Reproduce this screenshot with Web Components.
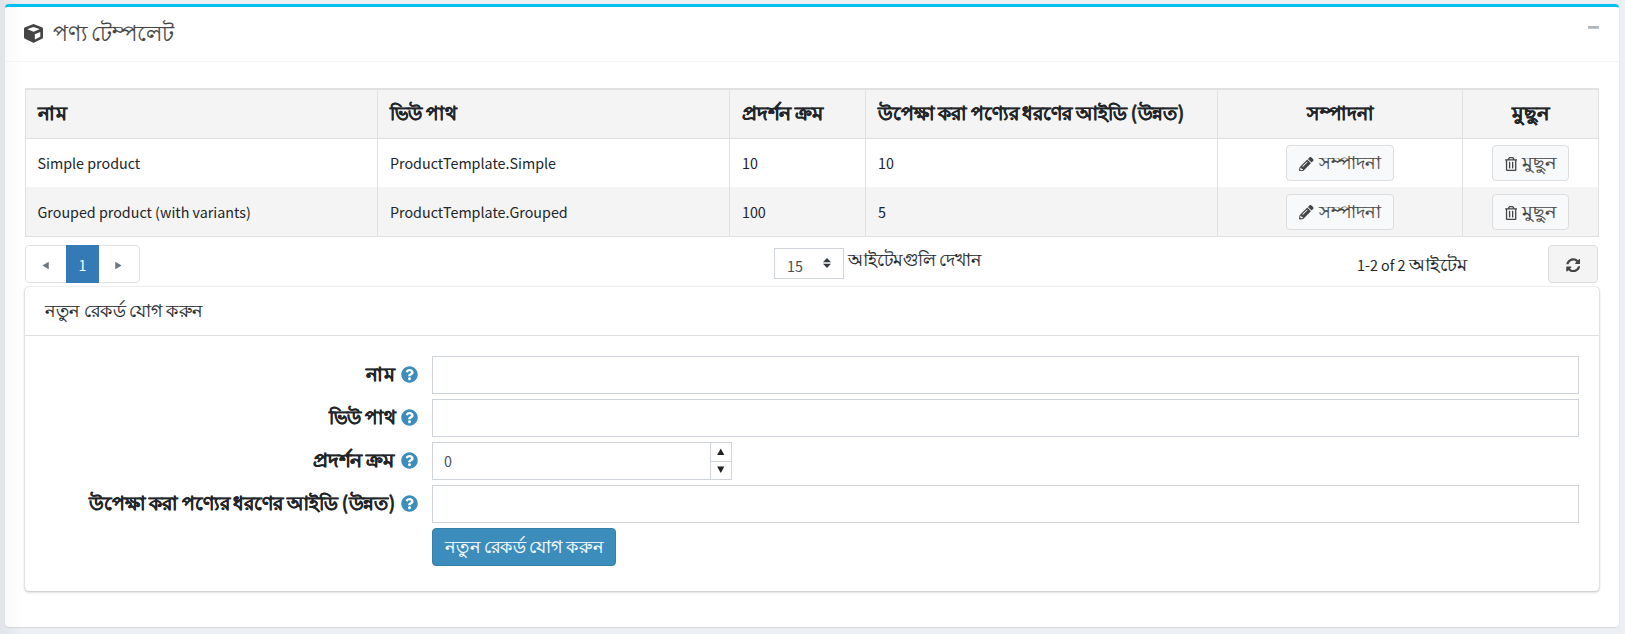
<!DOCTYPE html>
<html lang="bn"><head><meta charset="utf-8"><title>পণ্য টেম্পলেট</title>
<style>
html,body{margin:0;height:100%}
body{background:linear-gradient(90deg,#e1e5ea 0,#ecf0f5 22px);font:14.3px/24px "Source Sans Pro","Noto Sans CJK SC","Noto Sans",sans-serif;color:#212529;height:634px;overflow:hidden;box-sizing:border-box;padding:4px 6px 0 5px}
</style></head><body>
<admin-box>
  <fa-icon slot="title" name="cube" size="19"></fa-icon><bn-text slot="title" w="121" size="22" dy="-1.5">পণ্য টেম্পলেট</bn-text>
  <data-grid></data-grid>
  <grid-pager></grid-pager>
  <record-card heading="নতুন রেকর্ড যোগ করুন">
    <form-row label="নাম" w="29"><text-box></text-box></form-row>
    <form-row label="ভিউ পাথ" w="66.5"><text-box></text-box></form-row>
    <form-row label="প্রদর্শন ক্রম" w="82"><number-box value="0"></number-box></form-row>
    <form-row label="উপেক্ষা করা পণ্যের ধরণের আইডি (উন্নত)" w="306"><text-box></text-box></form-row>
    <form-row><action-button kind="primary"><bn-text w="159" dy="-2.5">নতুন রেকর্ড যোগ করুন</bn-text></action-button></form-row>
  </record-card>
</admin-box>
<script>
const ICONS={
cube:[512,"M239.1 6.3l-208 78c-18.7 7-31.1 25-31.1 45v225.1c0 18.2 10.3 34.8 26.5 42.9l208 104c13.5 6.8 29.4 6.8 42.9 0l208-104c16.3-8.1 26.5-24.8 26.5-42.9V129.3c0-20-12.4-37.9-31.1-44.9l-208-78C262 2.2 250 2.2 239.1 6.3zM256 78l160 60v3l-160 66-160-66v-3l160-60zm36 340V278l148-60v123l-148 77z"],
pencil:[512,"M497.9 142.1l-46.1 46.1c-4.7 4.7-12.3 4.7-17 0l-111-111c-4.7-4.7-4.7-12.3 0-17l46.1-46.1c18.7-18.7 49.1-18.7 67.9 0l60.1 60.1c18.8 18.7 18.8 49.1 0 67.9zM284.2 99.8L21.6 362.4.4 483.9c-2.9 16.4 11.4 30.6 27.8 27.8l121.5-21.3 262.6-262.6c4.7-4.7 4.7-12.3 0-17l-111-111c-4.8-4.7-12.4-4.7-17.1 0zM124.1 339.9c-5.5-5.5-5.5-14.3 0-19.8l154-154c5.5-5.5 14.3-5.5 19.8 0s5.5 14.3 0 19.8l-154 154c-5.5 5.5-14.3 5.5-19.8 0zM88 424h48v36.3l-64.5 11.3-31.1-31.1L51.7 376H88v48z"],
trash:[448,"M268 416h24a12 12 0 0 0 12-12V188a12 12 0 0 0-12-12h-24a12 12 0 0 0-12 12v216a12 12 0 0 0 12 12zM432 80h-82.41l-34-56.7A48 48 0 0 0 274.41 0H173.59a48 48 0 0 0-41.16 23.3L98.41 80H16A16 16 0 0 0 0 96v16a16 16 0 0 0 16 16h16v336a48 48 0 0 0 48 48h288a48 48 0 0 0 48-48V128h16a16 16 0 0 0 16-16V96a16 16 0 0 0-16-16zM171.84 50.91A6 6 0 0 1 177 48h94a6 6 0 0 1 5.15 2.91L293.61 80H154.39zM368 464H80V128h288zm-212-48h24a12 12 0 0 0 12-12V188a12 12 0 0 0-12-12h-24a12 12 0 0 0-12 12v216a12 12 0 0 0 12 12z"],
sync:[512,"M370.72 133.28C339.458 104.008 298.888 87.962 255.848 88c-77.458.068-144.328 53.178-162.791 126.85-1.344 5.363-6.122 9.15-11.651 9.15H24.103c-7.498 0-13.194-6.807-11.807-14.176C33.933 94.924 134.813 8 256 8c66.448 0 126.791 26.136 171.315 68.685L463.03 40.97C478.149 25.851 504 36.559 504 57.941V192c0 13.255-10.745 24-24 24H345.941c-21.382 0-32.09-25.851-16.971-40.971l41.75-41.749zM32 296h134.059c21.382 0 32.09 25.851 16.971 40.971l-41.75 41.75c31.262 29.273 71.835 45.319 114.876 45.28 77.418-.07 144.315-53.144 162.787-126.849 1.344-5.363 6.122-9.15 11.651-9.15h57.304c7.498 0 13.194 6.807 11.807 14.176C478.067 417.076 377.187 504 256 504c-66.448 0-126.791-26.136-171.315-68.685L48.97 471.03C33.851 486.149 8 475.441 8 454.059V320c0-13.255 10.745-24 24-24z"],
question:[512,"M504 256c0 136.997-111.043 248-248 248S8 392.997 8 256C8 119.083 119.043 8 256 8s248 111.083 248 248zM262.655 90c-54.497 0-89.255 22.957-116.549 63.758-3.536 5.286-2.353 12.415 2.715 16.258l34.699 26.31c5.205 3.947 12.621 3.008 16.665-2.122 17.864-22.658 30.113-35.797 57.303-35.797 20.429 0 45.698 13.148 45.698 32.958 0 14.976-12.363 22.667-32.534 33.976C247.128 238.528 216 254.941 216 296v4c0 6.627 5.373 12 12 12h56c6.627 0 12-5.373 12-12v-1.333c0-28.462 83.186-29.647 83.186-106.667 0-58.002-60.165-102-116.531-102zM256 338c-25.365 0-46 20.635-46 46 0 25.364 20.635 46 46 46s46-20.636 46-46c0-25.364-20.635-46-46-46z"],
minus:[448,"M436 200H12Q0 200 0 212V308Q0 320 12 320H436Q448 320 448 308V212Q448 200 436 200z"],
left:[512,"M440 40V472L80 256z"],right:[512,"M72 40V472L432 256z"],
up:[512,"M10 480H502L256 30z"],down:[512,"M10 32H502L256 482z"],
sort:[512,"M50 216H462L256 0zM50 296H462L256 512z"]};
const make=(tag,css,html)=>customElements.define(tag,class extends HTMLElement{
  connectedCallback(){if(this.shadowRoot)return;
    this.attachShadow({mode:"open"}).innerHTML=`<style>*{box-sizing:border-box}:host{box-sizing:border-box}${css}</style>`+(typeof html==="function"?html(this):html)}});

make("fa-icon",":host{display:inline-flex;flex:none}svg{display:block;fill:currentColor}",e=>{
  const [w,d]=ICONS[e.getAttribute("name")],s=+e.getAttribute("size");
  return `<svg width="${s*w/512}" height="${s}" viewBox="0 0 ${w} 512"><path d="${d}"/></svg>`});

make("action-button",`:host{display:inline-flex;align-items:center;justify-content:center;height:38px;padding:0 12px;border:1px solid #ddd;border-radius:4px;background:#f8f9fa;color:#444;gap:5px;white-space:nowrap}
::slotted(fa-icon){margin-top:2px}
:host([kind=primary]){background:#3c8dbc;border-color:#367fa9;color:#fff;width:184px}
:host([kind=edit]){width:108px;height:36px}:host([kind=delete]){width:77px;height:36px}
:host([kind=refresh]){width:50px;background:#f4f4f4;padding:0}`,"<slot></slot>");

make("admin-box",`:host{display:flex;flex-direction:column;height:623px;border-top:3px solid #00c0ef;border-radius:4px;background:linear-gradient(90deg,#fafafb 0,#fff 20px);box-shadow:0 1px 1px rgba(0,0,0,.1),0 0 1px rgba(0,0,0,.15)}
header{display:flex;height:55px;border-bottom:1px solid #f4f4f4;padding:0 20px 0 19px;color:#444;line-height:50px}
.t{display:flex;gap:10px;flex:1;align-items:flex-start}.t ::slotted(fa-icon){margin-top:17px}
.m{color:#adb5bd;margin-top:14px}main{display:flex;flex-direction:column;padding:26px 20px 0}`,
`<header><div class="t"><slot name="title"></slot></div><fa-icon class="m" name="minus" size="12.5"></fa-icon></header><main><slot></slot></main>`);

const HEAD=[["নাম",29],["ভিউ পাথ",66.5],["প্রদর্শন ক্রম",82],["উপেক্ষা করা পণ্যের ধরণের আইডি (উন্নত)",306],["সম্পাদনা",66.5],["মুছুন",37.5]];
const ROWS=[["Simple product","ProductTemplate.Simple","10","10"],["Grouped product (with variants)","ProductTemplate.Grouped","100","5"]];
make("data-grid",`:host{display:block;border:1px solid #e1e1e1;border-top-width:2px;width:1574px}
.r{display:grid;grid-template-columns:352px 352px 136px 352px 245px 135px;height:48px}
.h{height:49px;background:#f4f4f4;border-bottom:1px solid #e1e1e1;font-weight:700}
.alt{height:49px;background:#f4f4f4}
.r>div{display:flex;align-items:center;padding:0 12px 0 12px;border-right:1px solid #e1e1e1;white-space:nowrap}.r>div:last-child{border-right:0}
.r>div:first-child{padding-left:11.5px}
.r>div:nth-child(n+5){justify-content:center;padding:0}`,
()=>`<div class="r h">${HEAD.map(([x,w])=>`<div><bn-text w="${w}" size="19" dy="-2">${x}</bn-text></div>`).join("")}</div>`+ROWS.map((r,i)=>`<div class="r${i%2?" alt":""}">${r.map(x=>`<div>${x}</div>`).join("")}<div><action-button kind="edit"><fa-icon name="pencil" size="14.5"></fa-icon><bn-text w="62" dy="-2.5">সম্পাদনা</bn-text></action-button></div><div><action-button kind="delete"><fa-icon name="trash" size="14"></fa-icon><bn-text w="34.5" dy="-2.5">মুছুন</bn-text></action-button></div></div>`).join(""));

make("grid-pager",`:host{display:flex;align-items:flex-start;height:50px;padding-top:8px;width:1573px}
.p{display:flex;width:115px;height:38px;border:1px solid #dee2e6;border-radius:4px;color:#6c757d}
.p>*{display:flex;align-items:center;justify-content:center;width:40px}.p span{padding:3px 1px 0 0}.p b{width:33px;margin:-1px 0;padding-top:2px;background:#337ab7;color:#fff;font-weight:400}
.s{display:flex;align-items:center;justify-content:space-between;width:70px;height:31px;margin:3px 4px 0 634px;border:1px solid #ced4da;padding:4px 11px 0 12px;color:#495057}
.s fa-icon{margin-top:-6px;color:#343a40}.l{line-height:30px;width:134px;white-space:nowrap}
.i{margin-left:375px;width:191px;white-space:nowrap;display:flex;align-items:center;gap:4px;height:38px}.i span{padding-top:2px}`,
`<nav class="p"><span><fa-icon name="left" size="9"></fa-icon></span><b>1</b><span><fa-icon name="right" size="9"></fa-icon></span></nav><div class="s"><span>15</span><fa-icon name="sort" size="10"></fa-icon></div><div class="l"><bn-text w="134" dy="-2">আইটেমগুলি দেখান</bn-text></div><div class="i"><span>1-2 of 2</span><bn-text w="58" dy="-1.5">আইটেম</bn-text></div><action-button kind="refresh"><fa-icon name="sync" size="14.5"></fa-icon></action-button>`);

make("record-card",`:host{display:block;width:1574px;height:304px;border-radius:4px;background:#fff;box-shadow:0 0 1px rgba(0,0,0,.3),0 1px 3px rgba(0,0,0,.25)}
header{height:49px;border-bottom:1px solid #dfdfdf;padding-left:20px;line-height:47px}
main{display:flex;flex-direction:column;gap:5px;padding:20px 20px 0}`,e=>`<header><bn-text w="158.5">${e.getAttribute("heading")}</bn-text></header><main><slot></slot></main>`);

make("form-row",`:host{display:flex;height:38px}label{display:flex;justify-content:flex-end;align-items:center;width:373px;margin-right:14px;gap:6px;font-weight:700;white-space:nowrap}
fa-icon{color:#3c8dbc;margin-top:-1px}section{flex:1;display:flex}`,e=>`<label>${e.hasAttribute("label")?`<bn-text w="${e.getAttribute("w")}" size="19" dy="-2">${e.getAttribute("label")}</bn-text><fa-icon name="question" size="17"></fa-icon>`:""}</label><section><slot></slot></section>`);
make("text-box",":host{display:block;flex:1;height:38px;border:1px solid #ced4da;background:#fff}","");
make("number-box",`:host{display:flex;width:300px;height:38px;border:1px solid #ced4da;color:#495057}
.v{flex:1;padding:0 11px 0;line-height:36px}.b{width:21px;border-left:1px solid #ced4da;color:#222}.b div{height:16px;display:flex;align-items:center;justify-content:center}.b div:first-child{border-bottom:1px solid #ced4da;height:19px}`,
e=>`<div class="v">${e.getAttribute("value")}</div><div class="b"><div><fa-icon name="up" size="7.5"></fa-icon></div><div><fa-icon name="down" size="7.5"></fa-icon></div></div>`);

/* Bengali label with a fixed advance width (w), font size and baseline nudge (dy).
   Registered last so that it is measured with its final inherited font. */
customElements.define("bn-text",class extends HTMLElement{
  connectedCallback(){if(this.shadowRoot)return;
    const w=+this.getAttribute("w"),size=this.getAttribute("size")||18,dy=this.getAttribute("dy")||-1.5;
    const root=this.attachShadow({mode:"open"});
    root.innerHTML=`<style>:host{display:inline-block;flex:none;width:${w}px;white-space:nowrap;font-size:${size}px;word-spacing:-.5px;-webkit-text-stroke:.2px currentColor}
span{display:inline-block;transform-origin:0 50%}</style><span><slot></slot></span>`;
    const s=root.querySelector("span");
    s.style.transform=`translateY(${dy}px) scaleX(${w/s.offsetWidth})`}});
</script></body></html>
